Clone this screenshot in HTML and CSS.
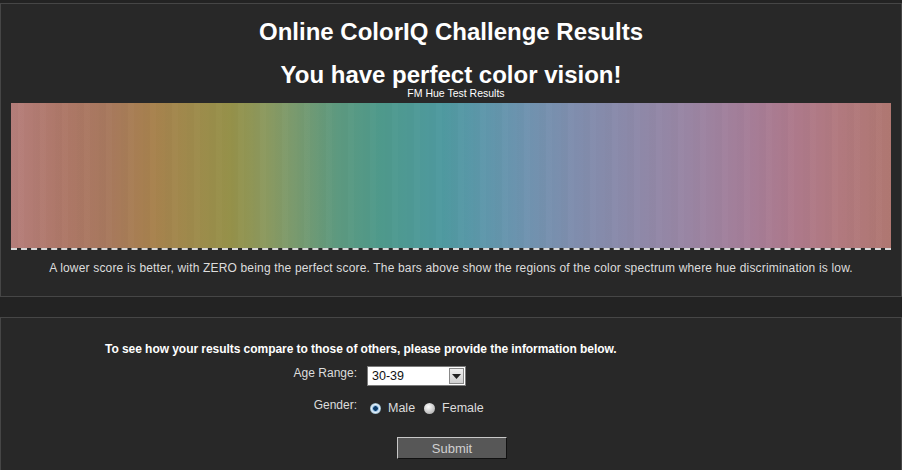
FILE: index.html
```html
<!DOCTYPE html>
<html>
<head>
<meta charset="utf-8">
<link rel="stylesheet" href="styles.css">
</head>
<body>
<div class="panel results">
  <h1 class="title">Online ColorIQ Challenge Results</h1>
  <h2 class="verdict">You have perfect color vision!</h2>
  <div class="chart-label">FM Hue Test Results</div>
  <div class="chart">
    <div class="spectrum"></div>
    <div class="baseline"></div>
  </div>
  <p class="caption">A lower score is better, with ZERO being the perfect score. The bars above show the regions of the color spectrum where hue discrimination is low.</p>
</div>
<div class="panel compare">
  <p class="intro">To see how your results compare to those of others, please provide the information below.</p>
  <div class="row">
    <span class="label">Age Range:</span>
    <div class="select"><span class="value">30-39</span><span class="arrow"><svg width="9" height="5" viewBox="0 0 9 5"><path d="M0 0h9L4.5 5z" fill="#222"/></svg></span></div>
  </div>
  <div class="row gender">
    <span class="label">Gender:</span>
    <span class="radio checked"></span><span class="opt">Male</span>
    <span class="radio"></span><span class="opt">Female</span>
  </div>
  <div class="submit-row"><button class="submit">Submit</button></div>
</div>
</body>
</html>
```
FILE: styles.css
```css
html, body {
  margin: 0;
  padding: 0;
  background: #232323;
  font-family: "Liberation Sans", Arial, sans-serif;
  color: #fff;
}
body { padding-top: 3px; width: 902px; height: 470px; overflow: hidden; }
.panel {
  background: #282828;
  border: 1px solid #464646;
  box-sizing: border-box;
}
.results {
  height: 294px;
  padding-top: 15px;
  margin: 0 0 20px 0;
}
.title {
  margin: 0;
  text-align: center;
  font-size: 24px;
  font-weight: bold;
  line-height: 26px;
}
.verdict {
  margin: 17px 0 0 0;
  text-align: center;
  font-size: 24px;
  font-weight: bold;
  line-height: 26px;
}
.chart-label {
  text-align: center;
  font-size: 10.5px;
  line-height: 10px;
  margin-top: 0;
  padding-left: 10px;
  color: #fff;
}
.chart {
  margin: 5px 10px 0 10px;
}
.spectrum {
  height: 145px;
  background:
    repeating-linear-gradient(90deg, rgba(0,0,0,0.014) 0 7px, rgba(255,255,255,0.01) 7px 13px, rgba(0,0,0,0.008) 13px 22px),
    linear-gradient(90deg,
      #b67f7c 0%,
      #ae7868 6%,
      #a8795e 11%,
      #a8824e 16%,
      #9e8c4c 21%,
      #96924a 25%,
      #8c9a60 29%,
      #7c9b6e 32%,
      #5e9a80 37%,
      #4f9a8c 42%,
      #4f9aa0 49%,
      #5c98aa 53%,
      #6e94b0 58%,
      #808eae 64%,
      #8c8aaa 70%,
      #9a86a4 77%,
      #a67e98 84%,
      #ae7a8c 89%,
      #b27a80 94%,
      #b07872 100%);
}
.baseline {
  height: 0;
  border-top: 2px dashed #d8d8d8;
}
.caption {
  margin: 11px 0 0 0;
  text-align: center;
  font-size: 12px;
  letter-spacing: 0.17px;
  line-height: 14px;
  color: #ddd;
}
.compare {
  height: 160px;
  padding: 24px 0 0 104px;
}
.intro {
  margin: 0;
  font-size: 12px;
  letter-spacing: -0.05px;
  font-weight: bold;
  line-height: 14px;
}
.row {
  display: flex;
  align-items: center;
  margin-top: 10px;
  font-size: 12px;
  color: #ddd;
}
.row .label { position: relative; top: -3px; }
.label {
  width: 252px;
  text-align: right;
  margin-right: 10px;
}
.select {
  width: 99px;
  height: 20px;
  background: #fff;
  border: 1px solid #7a7a7a;
  box-sizing: border-box;
  display: flex;
  align-items: center;
  color: #111;
}
.select .value { flex: 1; padding-left: 4px; font-size: 12.5px; }
.select .arrow {
  width: 15px;
  height: 16px;
  margin-right: 1px;
  background: linear-gradient(#f0f0f0, #cfcfcf);
  border: 1px solid #888;
  box-sizing: border-box;
  display: flex;
  align-items: center;
  justify-content: center;
}
.gender { margin-top: 15px; }
.radio {
  width: 11px;
  height: 11px;
  border-radius: 50%;
  background: radial-gradient(circle at 40% 35%, #fff, #bbb 70%, #888);
  margin: 0 7px 0 3px;
}
.radio.checked {
  background: radial-gradient(circle, #0c3a66 0 2px, #7aaedb 2.5px, #e8f2fb 4px, #8ab 5.5px);
}
.opt { margin-right: 6px; font-size: 12.5px; }
.submit-row { margin-top: 22px; padding-left: 292px; }
.submit {
  width: 110px;
  height: 22px;
  background: #575757;
  color: #d0d0d0;
  font-family: "Liberation Sans", Arial, sans-serif;
  font-size: 13px;
  border: 1px solid;
  border-color: #c8c8c8 #111 #111 #c8c8c8;
  padding: 0;
}
```
